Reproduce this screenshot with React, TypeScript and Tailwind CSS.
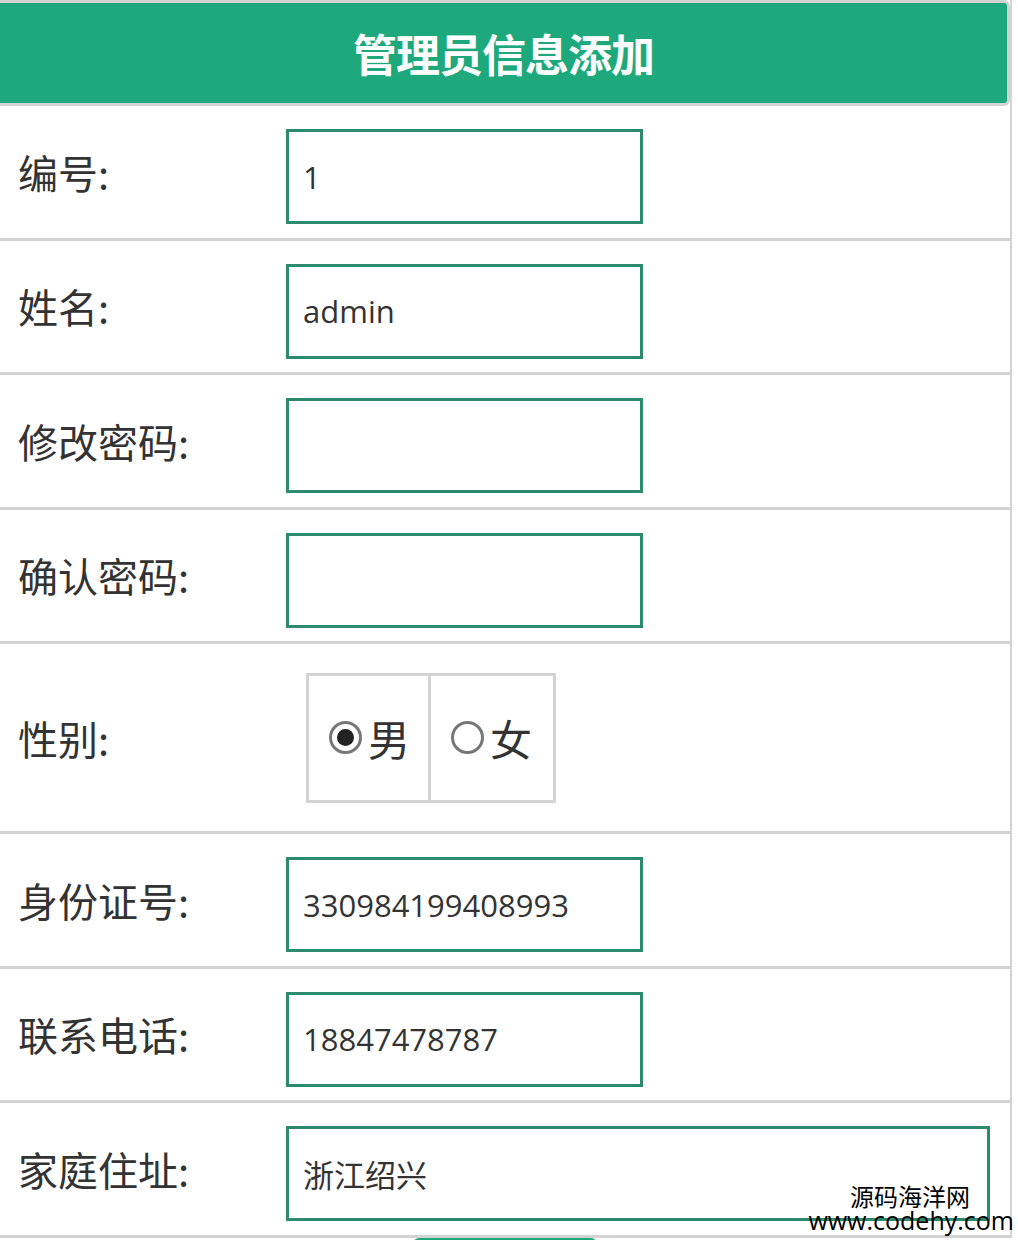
import { useState } from 'react'

const rows = [
  { label: '编号:', value: '1' },
  { label: '姓名:', value: 'admin' },
  { label: '修改密码:', value: '' },
  { label: '确认密码:', value: '' }
]

const rowsAfter = [
  { label: '身份证号:', value: '330984199408993' },
  { label: '联系电话:', value: '18847478787' }
]

function Field({ value, wide }: { value: string; wide?: boolean }) {
  return (
    <input
      className={
        'h-[95px] border-[3px] border-[#2b8b6c] px-[14px] text-[31px] text-[#333] outline-none ' +
        (wide ? 'w-[704px]' : 'w-[357px]')
      }
      style={{ fontFamily: '"Open Sans", "Noto Sans CJK SC", sans-serif' }}
      defaultValue={value}
      type="text"
    />
  )
}

function Row({ label, children }: { label: string; children: React.ReactNode }) {
  return (
    <div className="grid h-[134.5px] grid-cols-[286px_1fr] border-b-[3px] border-[#d3d3d3]">
      <div className="flex items-center pl-[18px] text-[40px] text-[#333]">{label}</div>
      <div className="pt-[23px]">{children}</div>
    </div>
  )
}

export default function App() {
  const [gender, setGender] = useState('男')

  return (
    <div
      className="relative h-[1240px] w-[1018px] overflow-hidden bg-white"
      style={{ fontFamily: '"Noto Sans CJK SC", "Noto Sans", sans-serif' }}
    >
      <div className="w-[1012px] border-r-2 border-[#d3d3d3]">
        <div className="flex h-[106px] items-center justify-center rounded-r-md border-y-[3px] border-r-[3px] border-[#d3d3d3] bg-[#1ea97c]">
          <span className="text-[44px] font-bold tracking-[-1px] text-white">管理员信息添加</span>
        </div>

        {rows.map(row => (
          <Row key={row.label} label={row.label}>
            <Field value={row.value} />
          </Row>
        ))}

        <div className="grid h-[190px] grid-cols-[286px_1fr] border-b-[3px] border-[#d3d3d3]">
          <div className="flex items-center pl-[18px] text-[40px] text-[#333]">性别:</div>
          <div className="flex items-center pl-[20px]">
            <div className="flex h-[130px] border-[3px] border-[#d3d3d3]">
              {['男', '女'].map((g, i) => (
                <label
                  key={g}
                  className={
                    'flex w-[122px] cursor-pointer items-center gap-[6px] pl-[20px] text-[42px] text-[#333] ' +
                    (i === 0 ? 'border-r-[3px] border-[#d3d3d3]' : '')
                  }
                  onClick={() => setGender(g)}
                >
                  <span className="flex h-[33px] w-[33px] items-center justify-center rounded-full border-[3px] border-[#777]">
                    {gender === g && <span className="h-[17px] w-[17px] rounded-full bg-[#222]" />}
                  </span>
                  {g}
                </label>
              ))}
            </div>
          </div>
        </div>

        {rowsAfter.map(row => (
          <Row key={row.label} label={row.label}>
            <Field value={row.value} />
          </Row>
        ))}

        <Row label="家庭住址:">
          <Field value="浙江绍兴" wide />
        </Row>
      </div>

      <div className="flex w-[1012px] pl-[413px]">
        <button className="h-[40px] w-[184px] rounded-md bg-[#1ea97c]" type="submit" aria-label="提交" />
      </div>

      <div className="absolute right-[4px] top-[1184px] flex flex-col items-end leading-none text-black">
        <span className="mr-[44px] text-[24px]">源码海洋网</span>
        <span className="text-[25px]" style={{ fontFamily: '"Open Sans", sans-serif' }}>
          www.codehy.com
        </span>
      </div>
    </div>
  )
}
